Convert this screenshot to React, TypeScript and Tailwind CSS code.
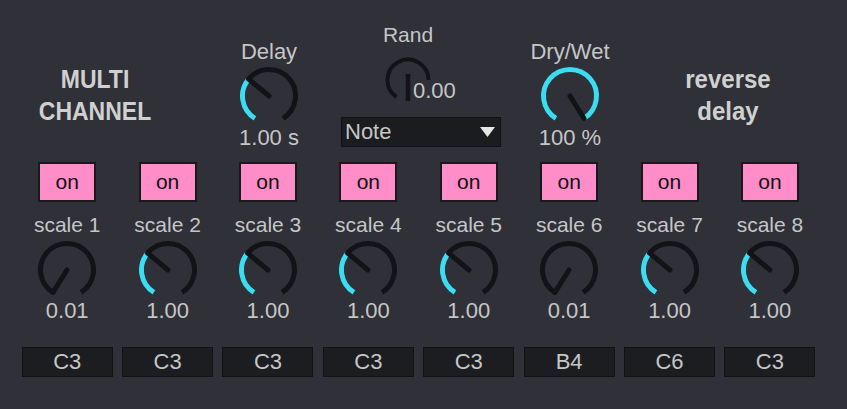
import React from 'react';

const ARC_MIN = -148;
const ARC_MAX = 148;
const CYAN = '#3ddcf0';
const DARK = '#121316';

function polar(cx: number, cy: number, r: number, deg: number) {
  const a = (deg * Math.PI) / 180;
  return [cx + r * Math.sin(a), cy - r * Math.cos(a)];
}

function arc(cx: number, cy: number, r: number, a0: number, a1: number) {
  const [x0, y0] = polar(cx, cy, r, a0);
  const [x1, y1] = polar(cx, cy, r, a1);
  const large = a1 - a0 > 180 ? 1 : 0;
  return `M ${x0} ${y0} A ${r} ${r} 0 ${large} 1 ${x1} ${y1}`;
}

// big dial, 64x64, value 0..1
function Dial({ value }: { value: number }) {
  const c = 32;
  const r = 26.5;
  const a = ARC_MIN + value * (ARC_MAX - ARC_MIN);
  const [nx, ny] = polar(c, c, r, a);
  return (
    <svg width="64" height="64" viewBox="0 0 64 64" className="block">
      <path d={arc(c, c, r, ARC_MIN, ARC_MAX)} stroke={DARK} strokeWidth="5" fill="none" />
      {value > 0.02 && <path d={arc(c, c, r, ARC_MIN, a)} stroke={CYAN} strokeWidth="5" fill="none" />}
      <line x1={c} y1={c} x2={nx} y2={ny} stroke={DARK} strokeWidth="5" strokeLinecap="round" />
    </svg>
  );
}

function RandDial() {
  const c = 25;
  const r = 20.5;
  return (
    <svg width="50" height="50" viewBox="0 0 50 50" className="block">
      <path d={arc(c, c, r, -146, 90)} stroke={DARK} strokeWidth="4" fill="none" />
      <line x1={c} y1={c - 6} x2={c} y2={c + 21} stroke={DARK} strokeWidth="4.5" />
    </svg>
  );
}

const channels = [
  { n: 1, v: 0, label: '0.01', note: 'C3' },
  { n: 2, v: 0.33, label: '1.00', note: 'C3' },
  { n: 3, v: 0.33, label: '1.00', note: 'C3' },
  { n: 4, v: 0.33, label: '1.00', note: 'C3' },
  { n: 5, v: 0.33, label: '1.00', note: 'C3' },
  { n: 6, v: 0, label: '0.01', note: 'B4' },
  { n: 7, v: 0.33, label: '1.00', note: 'C6' },
  { n: 8, v: 0.33, label: '1.00', note: 'C3' },
];

export default function App() {
  return (
    <div className="w-[847px] h-[409px] bg-[#2f3038] text-[#c6c6c6] font-['Liberation_Sans',Arial,sans-serif] overflow-hidden">
      <div className="grid grid-cols-[190px_158px_146px_152px_164px] h-[150px]">
        <div className="flex flex-col items-center pt-[63px] text-[23px] font-bold leading-[32px] text-[#d0d0d0]">
          <span className="scale-y-115">MULTI</span>
          <span className="scale-y-115">CHANNEL</span>
        </div>

        <div className="flex flex-col items-center pt-[40px]">
          <span className="text-[22px] leading-6">Delay</span>
          <Dial value={0.33} />
          <span className="text-[22px] leading-5">1.00 s</span>
        </div>

        <div className="flex flex-col items-center pt-[23px]">
          <span className="text-[21px] leading-6 mr-[26px]">Rand</span>
          <div className="relative w-[50px] h-[50px] mt-[8px] mr-[26px]">
            <RandDial />
            <span className="absolute left-[30px] top-[24px] text-[22px] leading-6">0.00</span>
          </div>
          <div className="mt-[12px] w-[160px] h-[30px] bg-[#1b1c20] border-[1.5px] border-[#101113] flex items-center justify-between pl-[3px] pr-[5px]">
            <span className="text-[22px] leading-6">Note</span>
            <svg width="15" height="10" viewBox="0 0 15 10">
              <polygon points="0,0 15,0 7.5,10" fill="#e6e6e6" />
            </svg>
          </div>
        </div>

        <div className="flex flex-col items-center pt-[40px]">
          <span className="text-[22px] leading-6">Dry/Wet</span>
          <Dial value={1} />
          <span className="text-[22px] leading-5">100 %</span>
        </div>

        <div className="flex flex-col items-center pt-[63px] text-[24px] font-bold leading-[32px] text-[#d0d0d0]">
          <span className="scale-y-110">reverse</span>
          <span className="scale-y-110">delay</span>
        </div>
      </div>

      <div className="grid grid-cols-[repeat(8,100.4px)] pl-[17px]">
        {channels.map((ch) => (
          <div key={ch.n} className="flex flex-col items-center">
            <div className="mt-[12px] w-[58px] h-[40px] bg-[#ff8dc7] border-2 border-[#19191c] flex items-center justify-center text-[21px] text-[#111] leading-6">
              on
            </div>
            <span className="mt-[11px] text-[21px] leading-6">scale {ch.n}</span>
            <div className="mt-[1px]">
              <Dial value={ch.v} />
            </div>
            <span className="-mt-[1px] text-[22px] leading-5">{ch.label}</span>
            <div className="mt-[26px] w-[91px] h-[30px] bg-[#1c1d21] border-[1.5px] border-[#111214] flex items-center justify-center text-[22px] leading-6">
              {ch.note}
            </div>
          </div>
        ))}
      </div>
    </div>
  );
}
